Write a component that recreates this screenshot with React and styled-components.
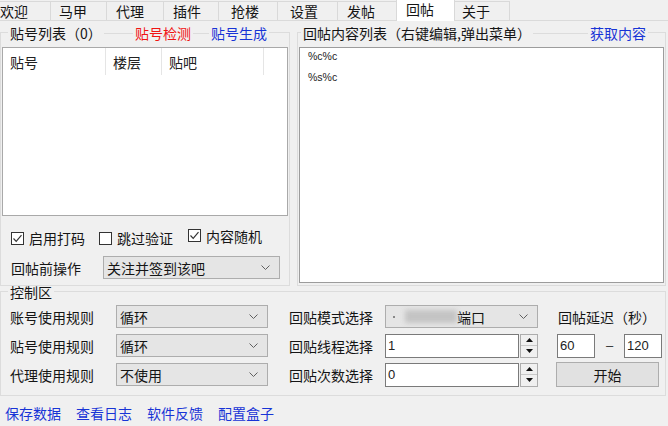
import React from 'react';
import styled, { createGlobalStyle } from 'styled-components';

const CJK = `"Noto Sans CJK SC", "Noto Sans CJK JP", "Liberation Sans", sans-serif`;
const SANS = `"Liberation Sans", Arial, sans-serif`;

const GlobalStyle = createGlobalStyle`
  html, body { margin: 0; padding: 0; background: #f0f0f0; }
  body { font-family: ${CJK}; }
  * { box-sizing: border-box; }
`;

const Window = styled.div`
  width: 668px;
  height: 426px;
  overflow: hidden;
  background: #f0f0f0;
  font-family: ${CJK};
  font-size: 14px;
  line-height: 16px;
  color: #151515;
  display: flex;
  flex-direction: column;
`;

const TabBar = styled.div`
  display: flex;
  align-items: flex-end;
  height: 21px;
  flex-shrink: 0;
  border-bottom: 1px solid #dadada;
`;

const Tab = styled.div`
  width: ${(p) => p.$w}px;
  height: ${(p) => (p.$active ? 22 : 19)}px;
  margin-bottom: ${(p) => (p.$active ? -1 : 0)}px;
  padding-left: ${(p) => p.$pl ?? 8}px;
  padding-top: ${(p) => (p.$active ? 1 : 1)}px;
  background: ${(p) => (p.$active ? '#ffffff' : '#f0f0f0')};
  border: 1px solid #d9d9d9;
  border-left: ${(p) => (p.$first ? 'none' : '1px solid #d9d9d9')};
  border-bottom: none;
  margin-right: -1px;
  white-space: nowrap;
  flex-shrink: 0;
`;

const Panel = styled.div`
  flex: 1;
  display: flex;
  flex-direction: column;
`;

const TopRow = styled.div`
  display: flex;
  gap: 7px;
  margin-top: 4px;
  height: 261px;
  flex: none;
  padding-right: 2px;
`;

const Group = styled.div`
  display: flex;
  flex-direction: column;
  width: ${(p) => (p.$w ? `${p.$w}px` : 'auto')};
  flex: ${(p) => (p.$w ? '0 0 auto' : '1')};
  margin-right: ${(p) => p.$mr ?? 0}px;
`;

const GroupHead = styled.div`
  display: flex;
  align-items: center;
  height: ${(p) => p.$h ?? 16}px;
  flex-shrink: 0;
`;

const Corner = styled.div`
  align-self: flex-end;
  width: ${(p) => p.$w}px;
  height: ${(p) => p.$h ?? 9}px;
  border-top: 1px solid #dcdcdc;
  border-left: ${(p) => (p.$right ? 'none' : '1px solid #dcdcdc')};
  border-right: ${(p) => (p.$right ? '1px solid #dcdcdc' : 'none')};
  flex: ${(p) => (p.$grow ? 1 : '0 0 auto')};
`;

const HeadLine = styled.div`
  height: 1px;
  background: #dcdcdc;
  width: ${(p) => (p.$w ? `${p.$w}px` : 'auto')};
  flex: ${(p) => (p.$w ? '0 0 auto' : 1)};
`;

const HeadTitle = styled.span`
  padding: 0 2px;
  white-space: nowrap;
  color: #151515;
`;

const HeadLink = styled.span`
  padding: 0 2px;
  white-space: nowrap;
  color: ${(p) => (p.$red ? '#f01414' : '#1834d6')};
`;

const GroupBody = styled.div`
  flex: 1;
  display: flex;
  flex-direction: column;
  border: 1px solid #dcdcdc;
  border-top: none;
  padding: ${(p) => p.$pad};
`;

const ListView = styled.div`
  height: 169px;
  flex-shrink: 0;
  background: #fff;
  border: 1px solid #a9a9a9;
  display: flex;
  flex-direction: column;
`;

const ListHeader = styled.div`
  display: flex;
  height: 27px;
  align-items: stretch;
`;

const HeadCell = styled.div`
  width: ${(p) => p.$w}px;
  padding-left: 7px;
  padding-top: 6px;
  border-right: 1px solid #e5e5e5;
  color: #222;
`;

const CheckRow = styled.div`
  display: flex;
  align-items: center;
  height: 16px;
  margin-top: 14px;
  padding-left: 9px;
`;

const CheckItem = styled.label`
  display: flex;
  align-items: center;
  gap: 5px;
  margin-right: ${(p) => p.$mr ?? 0}px;
  margin-bottom: ${(p) => (p.$raise ? 5 : 0)}px;
  white-space: nowrap;
`;

const Box = styled.span`
  width: 13px;
  height: 13px;
  border: 1px solid #333;
  background: #fff;
  display: flex;
  align-items: center;
  justify-content: center;
`;

const FieldRow = styled.div`
  display: flex;
  align-items: center;
  margin-top: 10px;
  padding-left: 9px;
  height: 23px;
`;

const Label = styled.span`
  width: ${(p) => (p.$w ? `${p.$w}px` : 'auto')};
  padding-left: ${(p) => p.$indent ?? 0}px;
  white-space: nowrap;
  flex-shrink: 0;
`;

const Combo = styled.div`
  width: ${(p) => p.$w}px;
  height: 23px;
  border: 1px solid #adadad;
  background: #e5e5e5;
  display: flex;
  align-items: center;
  justify-content: space-between;
  padding: 0 9px 0 3px;
  white-space: nowrap;
`;

const TextArea = styled.div`
  flex: 1;
  background: #fff;
  border: 1px solid #9c9c9c;
  padding: 1px 0 0 8px;
  display: flex;
  flex-direction: column;
  gap: 7px;
  font-family: ${SANS};
  font-size: 10.5px;
  line-height: 14px;
  color: #222;
`;

const ControlGroup = styled(Group)`
  flex: none;
  height: 110px;
`;

const ControlGrid = styled.div`
  display: grid;
  grid-template-columns: 106px 152px 117px 153px 125px;
  grid-template-rows: repeat(3, 23px);
  row-gap: 6px;
  align-items: center;
`;

const RightCell = styled.div`
  display: flex;
  align-items: center;
  padding-left: ${(p) => p.$indent ?? 0}px;
  height: ${(p) => p.$h ?? 23}px;
`;

const Input = styled.div`
  width: ${(p) => p.$w}px;
  height: 24px;
  background: #fff;
  border: 1px solid #7a7a7a;
  font-family: ${SANS};
  font-size: 13px;
  line-height: 22px;
  padding-left: 2px;
  color: #222;
`;

const Spin = styled.div`
  width: 18px;
  height: 24px;
  margin-left: 1px;
  border: 1px solid #adadad;
  background: #f0f0f0;
  display: flex;
  flex-direction: column;
`;

const SpinHalf = styled.div`
  flex: 1;
  display: flex;
  align-items: center;
  justify-content: center;
  border-top: ${(p) => (p.$down ? '1px solid #c9c9c9' : 'none')};
`;

const Dash = styled.span`
  width: 29px;
  text-align: center;
  font-family: ${SANS};
  font-size: 13px;
  color: #333;
`;

const Button = styled.div`
  width: 103px;
  height: 25px;
  margin-left: -1px;
  background: #e1e1e1;
  border: 1px solid #adadad;
  display: flex;
  align-items: center;
  justify-content: center;
`;

const Blur = styled.span`
  display: inline-block;
  width: 52px;
  height: 13px;
  margin: 0 0 0 10px;
  background: #c4c4c4;
  filter: blur(2.5px);
`;

const Dot = styled.span`
  display: inline-block;
  width: 2px;
  height: 2px;
  background: #888;
  margin-left: 4px;
`;

const ComboText = styled.span`
  display: flex;
  align-items: center;
`;

const LinkBar = styled.div`
  display: flex;
  gap: 15px;
  padding: 9px 0 0 5px;
  flex: none;
`;

const Link = styled.span`
  color: #1834d6;
  white-space: nowrap;
`;

const Chevron = () => (
  <svg width="9" height="5" viewBox="0 0 9 5">
    <path d="M0.5 0.5 L4.5 4.5 L8.5 0.5" fill="none" stroke="#606060" strokeWidth="1" />
  </svg>
);

const Check = () => (
  <svg width="11" height="11" viewBox="0 0 11 11">
    <path d="M1.5 5.5 L4.2 8.3 L9.5 2.2" fill="none" stroke="#333" strokeWidth="1.2" />
  </svg>
);

const Tri = ({ down }) => (
  <svg width="7" height="4" viewBox="0 0 7 4">
    <path d={down ? 'M0 0 L7 0 L3.5 4 Z' : 'M0 4 L7 4 L3.5 0 Z'} fill="#111" />
  </svg>
);

const tabs = [
  { t: '欢迎', w: 51, pl: 0, first: true },
  { t: '马甲', w: 57 },
  { t: '代理', w: 58, pl: 9 },
  { t: '插件', w: 56, pl: 9 },
  { t: '抢楼', w: 60, pl: 12 },
  { t: '设置', w: 61, pl: 12 },
  { t: '发帖', w: 60, pl: 9 },
  { t: '回帖', w: 59, pl: 9, active: true },
  { t: '关于', w: 56, pl: 7 },
];

function CheckBox({ checked, children, mr, raise }) {
  return (
    <CheckItem $mr={mr} $raise={raise}>
      <Box>{checked && <Check />}</Box>
      {children}
    </CheckItem>
  );
}

function SpinBox() {
  return (
    <Spin>
      <SpinHalf><Tri /></SpinHalf>
      <SpinHalf $down><Tri down /></SpinHalf>
    </Spin>
  );
}

export default function App() {
  return (
    <>
      <GlobalStyle />
      <Window>
        <TabBar>
          {tabs.map((x) => (
            <Tab key={x.t} $w={x.w} $pl={x.pl} $active={x.active} $first={x.first}>
              {x.t}
            </Tab>
          ))}
        </TabBar>
        <Panel>
          <TopRow>
            <Group $w={290}>
              <GroupHead>
                <Corner $w={8} />
                <HeadTitle>贴号列表（0）</HeadTitle>
                <HeadLine />
                <HeadLink $red>贴号检测</HeadLink>
                <HeadLine $w={16} />
                <HeadLink>贴号生成</HeadLink>
                <Corner $w={21} $right />
              </GroupHead>
              <GroupBody $pad="6px 1px 6px 1px">
                <ListView>
                  <ListHeader>
                    <HeadCell $w={103}>贴号</HeadCell>
                    <HeadCell $w={56}>楼层</HeadCell>
                    <HeadCell $w={102}>贴吧</HeadCell>
                  </ListHeader>
                </ListView>
                <CheckRow>
                  <CheckBox checked mr={14}>启用打码</CheckBox>
                  <CheckBox mr={15}>跳过验证</CheckBox>
                  <CheckBox checked raise>内容随机</CheckBox>
                </CheckRow>
                <FieldRow>
                  <Label $w={92}>回帖前操作</Label>
                  <Combo $w={177}>
                    关注并签到该吧
                    <Chevron />
                  </Combo>
                </FieldRow>
              </GroupBody>
            </Group>
            <Group>
              <GroupHead>
                <Corner $w={4} />
                <HeadTitle>回帖内容列表（右键编辑,弹出菜单）</HeadTitle>
                <HeadLine />
                <HeadLink>获取内容</HeadLink>
                <Corner $w={18} $right />
              </GroupHead>
              <GroupBody $pad="6px 1px 2px 1px">
                <TextArea>
                  <span>%c%c</span>
                  <span>%s%c</span>
                </TextArea>
              </GroupBody>
            </Group>
          </TopRow>
          <ControlGroup $mr={2}>
            <GroupHead $h={12}>
              <Corner $w={8} $h={7} />
              <HeadTitle>控制区</HeadTitle>
              <Corner $grow $right $h={7} />
            </GroupHead>
            <GroupBody $pad="7px 0 8px 9px">
              <ControlGrid>
                <Label>账号使用规则</Label>
                <Combo $w={152}>循环<Chevron /></Combo>
                <Label $indent={21}>回贴模式选择</Label>
                <Combo $w={153}>
                  <ComboText><Dot /><Blur />端口</ComboText>
                  <Chevron />
                </Combo>
                <RightCell $indent={20}>回帖延迟（秒）</RightCell>

                <Label>贴号使用规则</Label>
                <Combo $w={152}>循环<Chevron /></Combo>
                <Label $indent={21}>回贴线程选择</Label>
                <RightCell $h={24}><Input $w={134}>1</Input><SpinBox /></RightCell>
                <RightCell $indent={19} $h={24}>
                  <Input $w={38}>60</Input>
                  <Dash>–</Dash>
                  <Input $w={38}>120</Input>
                </RightCell>

                <Label>代理使用规则</Label>
                <Combo $w={152}>不使用<Chevron /></Combo>
                <Label $indent={21}>回贴次数选择</Label>
                <RightCell $h={24}><Input $w={134}>0</Input><SpinBox /></RightCell>
                <RightCell $indent={19} $h={25}>
                  <Button>开始</Button>
                </RightCell>
              </ControlGrid>
            </GroupBody>
          </ControlGroup>
          <LinkBar>
            <Link>保存数据</Link>
            <Link>查看日志</Link>
            <Link>软件反馈</Link>
            <Link>配置盒子</Link>
          </LinkBar>
        </Panel>
      </Window>
    </>
  );
}
